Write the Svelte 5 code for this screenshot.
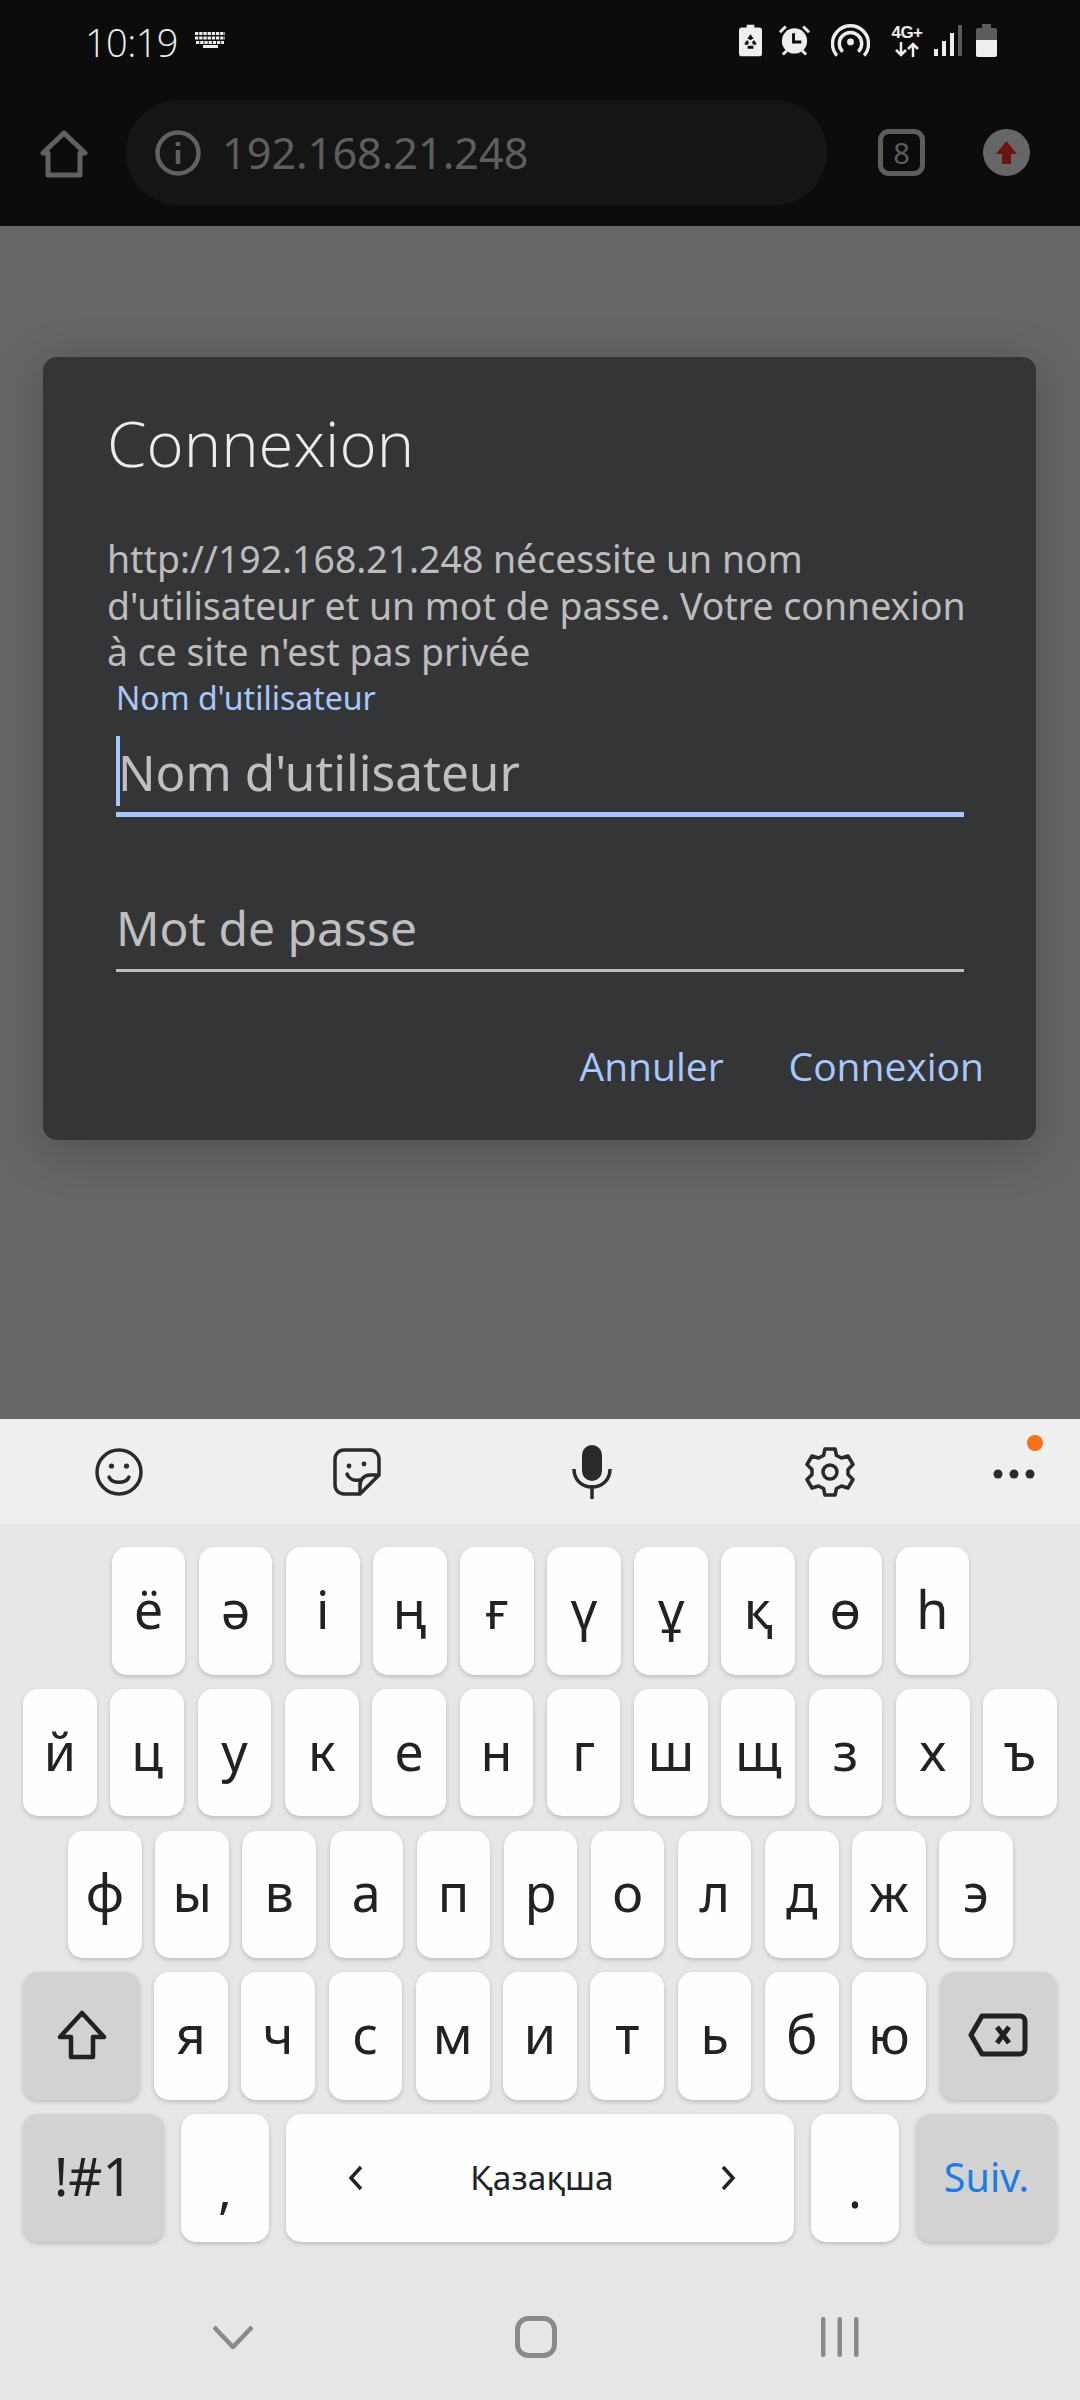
<script>
  const row1 = ['ё','ә','і','ң','ғ','ү','ұ','қ','ө','һ'];
  const row2 = ['й','ц','у','к','е','н','г','ш','щ','з','х','ъ'];
  const row3 = ['ф','ы','в','а','п','р','о','л','д','ж','э'];
  const row4 = ['я','ч','с','м','и','т','ь','б','ю'];
</script>

<div class="screen">
  <header class="chrome">
    <div class="status">
      <span class="time">10:19</span>
      <svg class="kbd-ic" viewBox="0 0 30 16" width="30" height="16" fill="none" stroke="#eee" stroke-width="3">
        <path d="M0 1.500h30M0 6h30M1 10.500h28" stroke-dasharray="3.300 .9"/><path d="M8 14.500h15"/>
      </svg>
      <div class="status-icons">
        <svg width="23" height="33" viewBox="0 0 24 33"><path fill="#eee" d="M8 0h8v3h5a3 3 0 0 1 3 3v24a3 3 0 0 1-3 3H3a3 3 0 0 1-3-3V6a3 3 0 0 1 3-3h5z"/><path fill="#0c0c0c" d="M12 10l3.500 5h-2.400v1h-2.200v-1H8.500zM6 19l2.500-3 2 2.500-1.500 2.500H6zM18 19l-2.500-3-2 2.500 1.500 2.500h3zM9 22h6v3H9z"/></svg>
        <svg class="m16" width="33" height="32" viewBox="0 0 34 32"><circle cx="17" cy="17" r="13" fill="#eee"/><path fill="none" stroke="#eee" stroke-width="3" d="M2 8l6-6M32 8l-6-6M9 27l-4 4M25 27l4 4"/><path fill="none" stroke="#0c0c0c" stroke-width="3" d="M16 9v9h8"/></svg>
        <svg class="m20" width="39" height="34" viewBox="0 0 40 34" fill="none" stroke="#eee" stroke-width="3.500"><circle cx="20" cy="19" r="3.500" fill="#eee" stroke="none"/><path d="M12 29a11.500 11.500 0 1 1 16 0"/><path d="M6 33a18.500 18.500 0 1 1 28 0"/></svg>
        <div class="net m21"><span class="lte">4G+</span>
          <svg width="24" height="15" viewBox="0 0 24 15" fill="none" stroke="#eee" stroke-width="2.500"><path d="M6 0v13M1 8l5 5 5-5M18 15V2M13 7l5-5 5 5"/></svg>
        </div>
        <svg class="m11" width="28" height="31" viewBox="0 0 28 31"><rect x="0" y="24" width="4" height="7" fill="#eee"/><rect x="8" y="16" width="4" height="15" fill="#eee"/><rect x="16" y="8" width="4" height="23" fill="#eee"/><rect x="24" y="0" width="4" height="31" fill="#5a5a5a"/></svg>
        <svg class="m14" width="21" height="33" viewBox="0 0 21 33"><path fill="#5c5c5c" d="M6 0h9v4h4a2 2 0 0 1 2 2v10H0V6a2 2 0 0 1 2-2h4z"/><path fill="#eee" d="M0 16h21v15a2 2 0 0 1-2 2H2a2 2 0 0 1-2-2z"/></svg>
      </div>
    </div>
    <div class="toolbar">
      <svg class="home" width="48" height="48" viewBox="0 0 48 48" fill="none" stroke="#616161" stroke-width="5" stroke-linejoin="round"><path d="M3 23L24 3l21 20h-5v22H8V23z"/></svg>
      <div class="omni">
        <svg width="46" height="46" viewBox="0 0 46 46" fill="none" stroke="#616161"><circle cx="23" cy="23" r="20.500" stroke-width="4.500"/><path d="M23 20v14M23 12v4" stroke-width="4.500"/></svg>
        <span class="url">192.168.21.248</span>
      </div>
      <div class="tabs">8</div>
      <svg class="avatar" width="47" height="47" viewBox="0 0 47 47"><circle cx="23.500" cy="23.500" r="23.500" fill="#666"/><path fill="#6b1513" d="M23.500 12L34 25h-6v10h-9V25h-6z"/></svg>
    </div>
  </header>

  <main class="page">
    <section class="dialog">
      <h1>Connexion</h1>
      <p>http://192.168.21.248 nécessite un nom d'utilisateur et un mot de passe. Votre connexion à ce site n'est pas privée</p>
      <div class="field focused">
        <div class="label">Nom d'utilisateur</div>
        <div class="input"><i class="caret"></i>Nom d'utilisateur</div>
      </div>
      <div class="field second">
        <div class="input">Mot de passe</div>
      </div>
      <div class="actions">
        <span>Annuler</span>
        <span>Connexion</span>
      </div>
    </section>
  </main>

  <section class="keyboard">
    <div class="kb-tools">
      <svg width="48" height="48" viewBox="0 0 48 48" fill="none" stroke="#2a2a2a" stroke-width="3.500"><circle cx="24" cy="24" r="22"/><circle cx="16.500" cy="18" r="2.600" fill="#2a2a2a" stroke="none"/><circle cx="31.500" cy="18" r="2.600" fill="#2a2a2a" stroke="none"/><path d="M14 29c3 7 17 7 20 0" stroke-linecap="round"/></svg>
      <svg class="t2" width="48" height="48" viewBox="0 0 48 48" fill="none" stroke="#2a2a2a" stroke-width="3.500" stroke-linejoin="round"><path d="M27 46H11a9 9 0 0 1-9-9V11a9 9 0 0 1 9-9h26a9 9 0 0 1 9 9v16z"/><path d="M27 46v-8a10 10 0 0 1 10-11h9"/><circle cx="16" cy="18" r="2.400" fill="#2a2a2a" stroke="none"/><circle cx="31" cy="16" r="2.400" fill="#2a2a2a" stroke="none"/><path d="M14 26c2 5 7 7 12 6" stroke-linecap="round"/></svg>
      <svg class="t3" width="40" height="54" viewBox="0 0 40 54" fill="none" stroke="#2a2a2a" stroke-width="3.500"><rect x="10" y="0" width="20" height="36" rx="10" fill="#2a2a2a" stroke="none"/><path d="M2 24c0 24 36 24 36 0M20 40v14"/></svg>
      <svg class="t4" width="50" height="50" viewBox="0 0 50 50" fill="none" stroke="#2a2a2a" stroke-width="3.500" stroke-linejoin="round"><path d="M20 2h10l1.500 6.500 5 2.500 6.500-2 5 8.500-5 5v5l5 5-5 8.500-6.500-2-5 2.500L30 48H20l-1.500-6.500-5-2.500-6.500 2-5-8.500 5-5v-5l-5-5L7 9l6.500 2 5-2.500z"/><circle cx="25" cy="25" r="7"/></svg>
      <div class="more">
        <i class="dot-orange"></i>
        <svg width="42" height="10" viewBox="0 0 42 10" fill="#2a2a2a"><circle cx="5" cy="5" r="4.500"/><circle cx="21" cy="5" r="4.500"/><circle cx="37" cy="5" r="4.500"/></svg>
      </div>
    </div>

    <div class="keys">
      <div class="row nudge">{#each row1 as k}<div class="key">{k}</div>{/each}</div>
      <div class="row">{#each row2 as k}<div class="key">{k}</div>{/each}</div>
      <div class="row nudge">{#each row3 as k}<div class="key">{k}</div>{/each}</div>
      <div class="row">
        <div class="key fn wide">
          <svg width="50" height="50" viewBox="0 0 50 50" fill="none" stroke="#222" stroke-width="4.500" stroke-linejoin="round"><path d="M25 3L47 27H36v20H14V27H3z"/></svg>
        </div>
        {#each row4 as k}<div class="key">{k}</div>{/each}
        <div class="key fn wide">
          <svg width="60" height="44" viewBox="0 0 60 44" fill="none" stroke="#222" stroke-width="5" stroke-linejoin="round"><path d="M14 3h38a5 5 0 0 1 5 5v28a5 5 0 0 1-5 5H14L3 22z"/><path d="M29 14l12 16M41 14L29 30"/></svg>
        </div>
      </div>
      <div class="row last">
        <div class="key fn sym">!#1</div>
        <div class="key punct"><span>,</span></div>
        <div class="key space">
          <svg width="16" height="26" viewBox="0 0 16 26" fill="none" stroke="#222" stroke-width="3.500"><path d="M13 2L3 13l10 11"/></svg>
          <span class="lang">Қазақша</span>
          <svg width="16" height="26" viewBox="0 0 16 26" fill="none" stroke="#222" stroke-width="3.500"><path d="M3 2l10 11L3 24"/></svg>
        </div>
        <div class="key punct"><span>.</span></div>
        <div class="key fn sym next">Suiv.</div>
      </div>
    </div>

    <nav class="nav">
      <svg width="40" height="24" viewBox="0 0 40 24" fill="none" stroke="#8a8a8a" stroke-width="4.500"><path d="M1 2l19 20L39 2"/></svg>
      <svg width="42" height="42" viewBox="0 0 42 42" fill="none" stroke="#8a8a8a" stroke-width="5"><rect x="2.500" y="2.500" width="37" height="37" rx="11"/></svg>
      <svg width="38" height="40" viewBox="0 0 38 40" fill="#8a8a8a"><rect x="0" y="0" width="4.500" height="40" rx="2"/><rect x="16.500" y="0" width="4.500" height="40" rx="2"/><rect x="33" y="0" width="4.500" height="40" rx="2"/></svg>
    </nav>
  </section>
</div>

<style>
  :global(body) { margin: 0; background: #e6e6e6; }
  .screen { width: 1080px; height: 2400px; display: flex; flex-direction: column; overflow: hidden; font-family: "Noto Sans", sans-serif; }

  .chrome { height: 226px; background: #0c0c0c; box-sizing: border-box; }
  .status { height: 100px; display: flex; align-items: flex-start; padding: 21px 0 0 85px; box-sizing: border-box; color: #eee; }
  .time { font-size: 38px; line-height: 42px; font-family: "Open Sans", sans-serif; font-weight: 300; letter-spacing: -.6px; }
  .kbd-ic { margin: 11px 0 0 17px; }
  .status-icons { margin-left: auto; margin-right: 83px; display: flex; align-items: center; margin-top: 2px; }
  .m11 { margin-left: 11px; } .m14 { margin-left: 14px; } .m16 { margin-left: 16px; } .m20 { margin-left: 20px; } .m21 { margin-left: 21px; }
  .net { display: flex; flex-direction: column; align-items: center; width: 32px; }
  .lte { font-size: 17px; line-height: 18px; font-weight: 600; color: #eee; font-family: "Liberation Sans", sans-serif; letter-spacing: -.5px; }

  .toolbar { height: 105px; display: flex; align-items: center; position: relative; }
  .home { margin-left: 40px; margin-top: 2px; }
  .omni { margin-left: 38px; width: 701px; height: 105px; border-radius: 52px; background: #141616; display: flex; align-items: center; padding-left: 29px; box-sizing: border-box; }
  .url { margin-left: 21px; font-size: 43.200px; color: #5e5e5e; line-height: 50px; }
  .tabs { margin-left: 51px; width: 47px; height: 47px; box-sizing: border-box; border: 5px solid #5e5e5e; border-radius: 11px; color: #5e5e5e; font-size: 29px; display: flex; align-items: center; justify-content: center; }
  .avatar { margin-left: 58px; }

  .page { height: 1193px; background: #666; padding: 131px 44px 0 43px; box-sizing: border-box; }
  .dialog { height: 783px; background: #343537; border-radius: 14px; padding: 38px 71px 0 64px; box-sizing: border-box; box-shadow: 0 10px 50px rgba(0,0,0,.22); position: relative; }
  h1 { margin: 0; font-weight: 300; font-size: 63.500px; line-height: 96px; color: #ececec; font-family: "Open Sans", sans-serif; }
  p { margin: 44px -12px 0 0; font-size: 37.400px; line-height: 46.500px; color: #bdbdbb; padding-top: 1px; }
  .field { margin-left: 9px; margin-right: 1px; }
  .label { font-size: 32px; line-height: 44px; color: #a8c7fa; }
  .input { height: 97px; position: relative; font-size: 49.500px; line-height: 62px; padding: 21px 0 0 2px; box-sizing: border-box; color: #bfbfbd; border-bottom: 5px solid #a8c7fa; }
  .caret { position: absolute; left: 0; top: 16px; width: 4px; height: 70px; background: #a8c7fa; }
  .second { margin-top: 71px; }
  .second .input { height: 84px; border-bottom: 3px solid #bdbdbb; padding: 9px 0 0 0; font-size: 48px; }
  .actions { position: absolute; right: 52px; top: 684px; display: flex; gap: 65px; color: #a8c7fa; font-size: 39px; font-weight: 500; line-height: 50px; font-family: "Open Sans", sans-serif; }

  .keyboard { flex: 1; background: #e6e6e6; display: flex; flex-direction: column; }
  .kb-tools { height: 105px; background: #efefef; display: flex; align-items: center; padding: 0 0 0 95px; box-sizing: border-box; position: relative; }
  .t2 { margin-left: 190px; } .t3 { margin-left: 191px; } .t4 { margin-left: 193px; }
  .more { position: relative; width: 42px; margin-left: 138px; }
  .dot-orange { position: absolute; right: -8px; top: -29px; width: 16px; height: 16px; border-radius: 50%; background: #f6711a; }
  .more svg { display: block; margin-top: 5px; }

  .keys { padding: 23px 23px 0; display: flex; flex-direction: column; gap: 14.300px; }
  .row { display: flex; justify-content: center; gap: 13.700px; height: 127.500px; }
  .row.nudge { padding-left: 1px; gap: 13.500px; }
  .key { width: 73.600px; height: 100%; flex: none; background: #fefefe; border-radius: 15px; box-shadow: 0 2px 4px rgba(0,0,0,.18); display: flex; align-items: center; justify-content: center; color: #222; font-size: 52px; line-height: 1; padding-bottom: 4px; box-sizing: border-box; }
  .key.fn { background: #d2d2d2; }
  .key.wide { width: 117px; padding-bottom: 2px; }
  .key.sym { width: 141px; font-size: 53px; }
  .key.next { color: #1a7de6; font-size: 39.500px; padding-bottom: 0; }
  .key.punct { width: 88px; }
  .key.punct span { margin-top: 24px; }
  .row.last { gap: 17px; }
  .key.space { width: 508px; justify-content: space-between; padding: 0 58px 0 62px; }
  .lang { font-size: 33.500px; }

  .nav { flex: 1; display: flex; align-items: center; justify-content: flex-start; padding: 32px 0 0 213px; box-sizing: border-box; }
  .nav svg:nth-child(2) { margin-left: 262px; }
  .nav svg:nth-child(3) { margin-left: 264px; }
</style>
